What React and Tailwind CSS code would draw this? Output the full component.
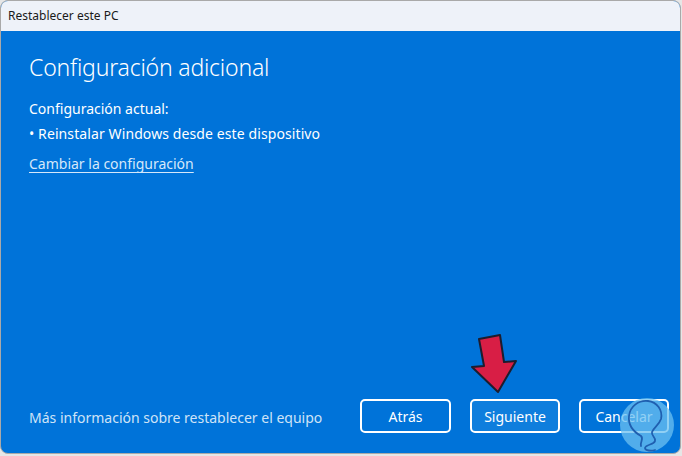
import React from "react";

export default function App() {
  const font = { fontFamily: '"Noto Sans", "Open Sans", sans-serif' };
  return (
    <div className="w-[682px] h-[456px] bg-[#e6e6e6] relative overflow-hidden" style={font}>
      <div className="w-[681px] h-[454px] rounded-[8px] border border-[#a9a9a9] overflow-hidden flex flex-col bg-[#0073d9]">
        <div className="h-[30px] bg-[#eef2f9] flex items-center pl-[7px] text-[12px] text-[#1a1a1a] shrink-0">
          Restablecer este PC
        </div>
        <div className="flex-1 flex flex-col px-[28px] text-white">
          <div className="pt-[20px] text-[23px] font-light leading-[32px] tracking-[-0.2px]">Configuración adicional</div>
          <div className="mt-[13px] text-[14px] leading-[25px]">Configuración actual:</div>
          <div className="text-[14px] leading-[25px] tracking-[0.1px]">• Reinstalar Windows desde este dispositivo</div>
          <div className="mt-[5px] text-[14px] leading-[25px] text-[#d6e8fa] underline underline-offset-[3px] decoration-1">
            Cambiar la configuración
          </div>
          <div className="flex-1" />
          <div className="flex items-center pb-[20px]">
            <div className="flex-1 text-[14px] text-[#cfe3f7] pt-[3px]">Más información sobre restablecer el equipo</div>
            <div className="flex gap-[19px] mr-[-17px]">
              <button className="w-[91px] h-[34px] rounded-[5px] border-2 border-white text-[14px] text-white">Atrás</button>
              <button className="w-[90px] h-[34px] rounded-[5px] border-2 border-white text-[14px] text-white bg-[#0f7edd]">Siguiente</button>
              <button className="w-[90px] h-[34px] rounded-[5px] border-2 border-white text-[14px] text-white">Cancelar</button>
            </div>
          </div>
        </div>
      </div>
      <svg className="absolute left-0 top-0 pointer-events-none" width="682" height="456" viewBox="0 0 682 456">
        <polygon
          points="479,339 500,335 504,362 516,361 498,392 472,367 484,366"
          fill="#d81e45"
          stroke="#1d1d2e"
          strokeWidth="2"
          strokeLinejoin="round"
        />
        <circle cx="647" cy="425" r="27" fill="#6cc0f0" fillOpacity="0.75" />
        <path
          d="M641 446 C640 441 644 439 641 436 C634 432 628 425 629 416 C630 406 639 400 648 401 C657 402 663 410 661 419 C659 425 654 427 652 432 C651 436 656 437 655 441 C654 445 646 444 645 448 C645 451 652 451 655 450"
          fill="none"
          stroke="#1f5fb0"
          strokeWidth="1.8"
          strokeLinecap="round"
        />
      </svg>
    </div>
  );
}
